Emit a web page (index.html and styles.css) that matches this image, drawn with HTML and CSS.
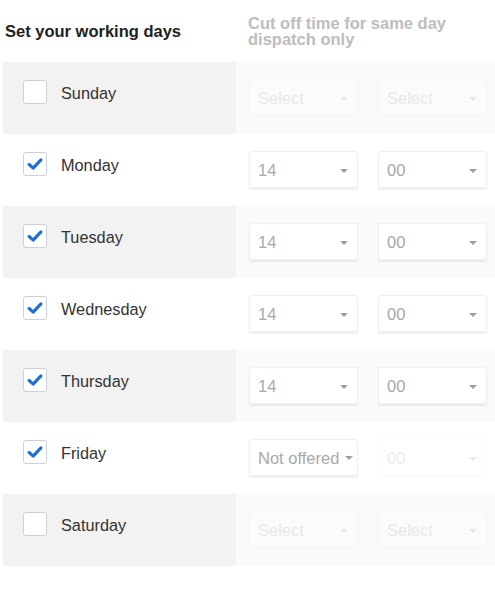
FILE: index.html
```html
<!DOCTYPE html>
<html>
<head>
<meta charset="utf-8">
<link rel="stylesheet" href="styles.css">
</head>
<body>
<div class="table">
  <div class="head">
    <div class="head-left">Set your working days</div>
    <div class="head-right">Cut off time for same day dispatch only</div>
  </div>

  <div class="row shade">
    <div class="day"><span class="box"></span><span class="label">Sunday</span></div>
    <div class="times">
      <div class="select faint"><span class="val">Select</span><span class="arrow"></span></div>
      <div class="select faint"><span class="val">Select</span><span class="arrow"></span></div>
    </div>
  </div>

  <div class="row">
    <div class="day"><span class="box"><svg viewBox="0 0 24 24" class="tick"><path d="M5.5 12.5 L10 16.5 L18.5 7.5" /></svg></span><span class="label">Monday</span></div>
    <div class="times">
      <div class="select"><span class="val">14</span><span class="arrow"></span></div>
      <div class="select"><span class="val">00</span><span class="arrow"></span></div>
    </div>
  </div>

  <div class="row shade">
    <div class="day"><span class="box"><svg viewBox="0 0 24 24" class="tick"><path d="M5.5 12.5 L10 16.5 L18.5 7.5" /></svg></span><span class="label">Tuesday</span></div>
    <div class="times">
      <div class="select"><span class="val">14</span><span class="arrow"></span></div>
      <div class="select"><span class="val">00</span><span class="arrow"></span></div>
    </div>
  </div>

  <div class="row">
    <div class="day"><span class="box"><svg viewBox="0 0 24 24" class="tick"><path d="M5.5 12.5 L10 16.5 L18.5 7.5" /></svg></span><span class="label">Wednesday</span></div>
    <div class="times">
      <div class="select"><span class="val">14</span><span class="arrow"></span></div>
      <div class="select"><span class="val">00</span><span class="arrow"></span></div>
    </div>
  </div>

  <div class="row shade">
    <div class="day"><span class="box"><svg viewBox="0 0 24 24" class="tick"><path d="M5.5 12.5 L10 16.5 L18.5 7.5" /></svg></span><span class="label">Thursday</span></div>
    <div class="times">
      <div class="select"><span class="val">14</span><span class="arrow"></span></div>
      <div class="select"><span class="val">00</span><span class="arrow"></span></div>
    </div>
  </div>

  <div class="row">
    <div class="day"><span class="box"><svg viewBox="0 0 24 24" class="tick"><path d="M5.5 12.5 L10 16.5 L18.5 7.5" /></svg></span><span class="label">Friday</span></div>
    <div class="times">
      <div class="select"><span class="val">Not offered</span><span class="arrow tight"></span></div>
      <div class="select faint"><span class="val">00</span><span class="arrow"></span></div>
    </div>
  </div>

  <div class="row shade">
    <div class="day"><span class="box"></span><span class="label">Saturday</span></div>
    <div class="times">
      <div class="select faint"><span class="val">Select</span><span class="arrow"></span></div>
      <div class="select faint"><span class="val">Select</span><span class="arrow"></span></div>
    </div>
  </div>
</div>
</body>
</html>
```
FILE: styles.css
```css
html, body {
  margin: 0;
  padding: 0;
  background: #ffffff;
}
body {
  font-family: "Liberation Sans", Arial, sans-serif;
  width: 495px;
  height: 593px;
  overflow: hidden;
}
.table {
  margin-left: 3px;
  width: 492px;
}
.head {
  display: grid;
  grid-template-columns: 233px 1fr;
  height: 62px;
}
.head-left {
  font-size: 16.5px;
  font-weight: bold;
  color: #222;
  padding: 22px 0 0 2px;
  line-height: 19px;
}
.head-right {
  font-size: 16.5px;
  font-weight: bold;
  color: #bdbdbd;
  line-height: 16px;
  padding: 15px 0 0 12px;
  width: 230px;
}
.row {
  display: grid;
  grid-template-columns: 233px 1fr;
  height: 72px;
}
.day {
  display: flex;
  align-items: flex-start;
  padding: 18px 0 0 20px;
}
.shade .day {
  background: #f2f2f2;
}
.shade .times {
  background: #fafafa;
}
.box {
  width: 22px;
  height: 22px;
  border: 1px solid #cfcfcf;
  border-radius: 3px;
  background: #fff;
  display: flex;
  align-items: center;
  justify-content: center;
  flex: none;
}
.tick {
  width: 22px;
  height: 22px;
}
.tick path {
  fill: none;
  stroke: #1a6fd0;
  stroke-width: 3.4;
  stroke-linecap: round;
  stroke-linejoin: round;
}
.label {
  margin-left: 14px;
  font-size: 16.3px;
  color: #333;
  line-height: 24px;
  margin-top: 1px;
}
.times {
  display: flex;
  gap: 20px;
  padding: 18px 0 0 13px;
  align-items: flex-start;
}
.select {
  height: 35px;
  border: 1px solid #f0f0f0;
  border-radius: 3px;
  background: #fff;
  box-shadow: 0 2px 2px rgba(0, 0, 0, 0.07);
  display: flex;
  align-items: center;
  justify-content: space-between;
  padding: 0 9px 0 8px;
  box-sizing: content-box;
  width: 90px;
  margin-top: -1px;
}
.val {
  font-size: 16.5px;
  color: #a9a9a9;
  padding-top: 2px;
  white-space: nowrap;
}
.arrow {
  width: 0;
  height: 0;
  border-left: 4px solid transparent;
  border-right: 4px solid transparent;
  border-top: 4px solid #9e9e9e;
  margin-top: 3px;
}
.arrow.tight {
  margin-right: -5px;
  margin-left: 1px;
  margin-top: 0;
}
.faint {
  opacity: 0.22;
}
```
